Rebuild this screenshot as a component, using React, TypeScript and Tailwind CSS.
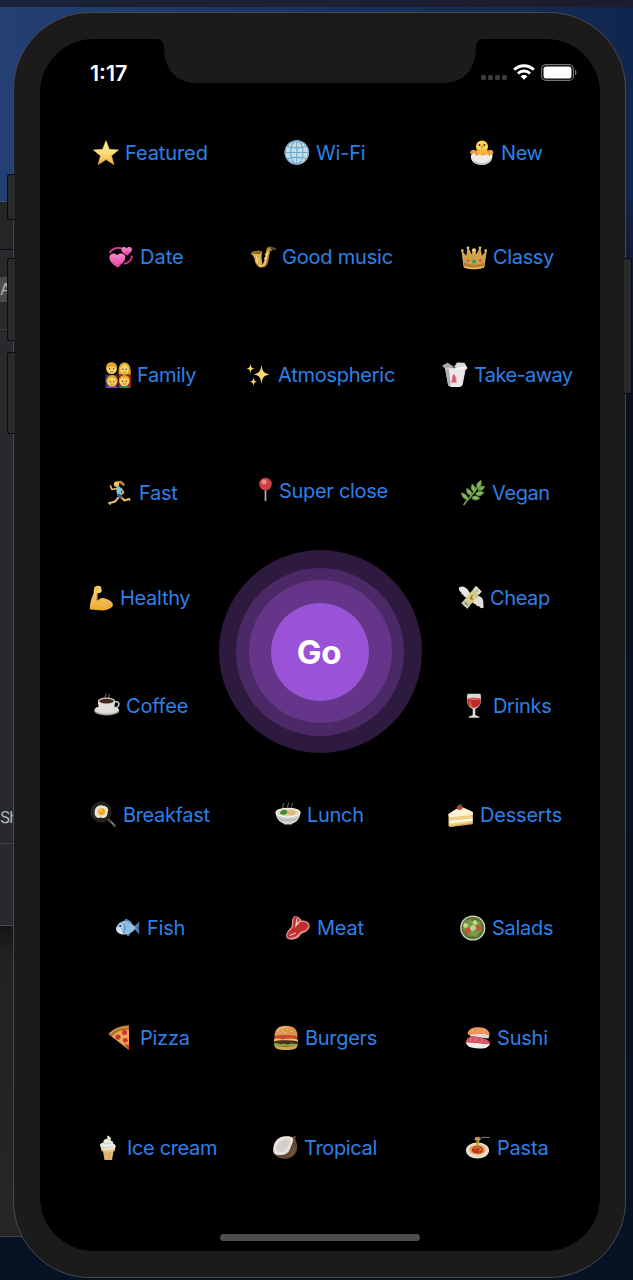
import type { ReactNode } from "react";

type Item = { label: string; pad: string; track: string; icon: ReactNode };

const star = (
  <>
    <defs>
      <linearGradient id="star" x1="0" y1="0" x2="0" y2="1">
        <stop offset="0" stopColor="#fff0a8" />
        <stop offset="0.5" stopColor="#fbdc7c" />
        <stop offset="1" stopColor="#eeb03c" />
      </linearGradient>
    </defs>
    <path d="M13 .6 16.4 9.3 25.6 9.9 18.5 15.7 20.9 24.6 13 19.6 5.2 24.6 7.5 15.7.3 9.9 9.6 9.3Z" fill="url(#star)" stroke="#eebd58" strokeWidth=".6" strokeLinejoin="round" />
  </>
);

const globe = (
  <>
    <circle cx="12.8" cy="12.5" r="12.2" fill="#c6dde8" />
    <g fill="none" stroke="#6fa9ca" strokeWidth="1.1">
      <circle cx="12.8" cy="12.5" r="11.6" />
      <ellipse cx="12.8" cy="12.5" rx="6.2" ry="11.8" />
      <path d="M12.8.6v24M.8 12.5h24M3 6.2c5.5 2.2 14 2.2 19.6 0M3 18.8c5.500-2.200 14-2.200 19.600 0" />
    </g>
  </>
);

const chick = (
  <>
    <path d="M1 12.5C2 9.400 5 9 7.500 11L18.500 11C21 9 24 9.500 24.500 12.500 23 15.500 20 17 13 17S2.500 15.500 1 12.500Z" fill="#f09a3c" />
    <path d="M2 15 5 13l3 3 3.200-3 3 3 3.200-3 2.800 3 3-3c1.500 7-3 12-10 12S1 21.500 2 15Z" fill="#efece8" />
    <path d="M3.200 18.500C5 23 9 25 13 25s8-2 9.600-7C20 22 16 23.200 13 23.200S6 22 3.200 18.500Z" fill="#c2bbb6" />
    <circle cx="13" cy="6.500" r="6" fill="#fbd657" />
    <path d="M7.500 9h10.600l1.500 5-2 1.600-3.300-2.900-3 3-3.200-3Z" fill="#f8b94b" />
    <circle cx="10.500" cy="5" r="1" fill="#3b2a17" />
    <circle cx="15.400" cy="5" r="1" fill="#3b2a17" />
    <path d="m11.500 6.500 1.500-.8 1.500.8-1.500 2Z" fill="#e87a25" />
  </>
);

const hearts = (
  <>
    <defs>
      <linearGradient id="pink" x1="0" y1="0" x2="0" y2="1">
        <stop offset="0" stopColor="#fb8acb" />
        <stop offset="1" stopColor="#db3c9b" />
      </linearGradient>
    </defs>
    <path d="M2 8.500C4 5 8 3.600 13 4.200M23.800 12.500C23.500 16 20.500 18.500 17 19.600" fill="none" stroke="#c93a8b" strokeWidth="2" strokeLinecap="round" />
    <path d="M9.800 23.800C6.500 21.500 1.200 18 1.400 13.300 1.600 9.400 6.500 8.200 9 11.200 12 8 17.600 9.200 17.300 13.700 17 18 12.500 20.500 9.800 23.800Z" fill="url(#pink)" />
    <path d="M19.200 11.800C16.500 10 13 8.300 13.300 5.300 13.700 2.600 17 2.200 18.500 4.400 20.600 1.800 24.300 2.800 24 5.800 23.700 8.500 20.800 9.500 19.200 11.800Z" fill="url(#pink)" />
  </>
);

const sax = (
  <>
    <path d="M21.500 4.500 18.500 5.500 16 17.500c-.8 5-6.500 5.500-8 1L6.500 12" fill="none" stroke="#b98b2a" strokeWidth="4" strokeLinejoin="round" />
    <path d="M.8 9.500C3 6.500 9 5.800 12.500 8c-1.500 3-1 6-.5 9.500 1 4-5.500 5.500-6.800.5C4.800 15 4 12 .8 9.500Z" fill="#dcb24c" />
    <path d="M18 7 15 18.500c-.7 3-4 4.500-6 2.500" fill="none" stroke="#efcf72" strokeWidth="1.600" />
    <path d="M1.300 9.400C4 7 9 6.500 12 8.200L9.500 10Z" fill="#7b5719" />
    <path d="M6.500 12.500 7.500 18.500M14.800 10l3 .8M14 14.200l3 .7" stroke="#fff0a4" strokeWidth="1" />
    <path d="m21.500 4 3 1" stroke="#4c4c4e" strokeWidth="2.500" strokeLinecap="round" />
  </>
);

const crown = (
  <>
    <path d="m1 7 4.500 6L7 3.800l3.700 7.700L13 5l2.500 6.500L19 3.800l1.600 9.200L25.200 7 23 23c-5 2.500-15 2.500-20 0Z" fill="#d1a044" stroke="#e8c46d" strokeWidth=".8" strokeLinejoin="round" />
    <path d="M3 18.500c5 2.800 15 2.800 20.200 0L22.800 23c-5 2.500-15 2.500-19.800 0Z" fill="#b57d2f" />
    <g fill="#f0d27f">
      <circle cx="1.400" cy="6.500" r="1.200" /><circle cx="7" cy="3.800" r="1.300" /><circle cx="13" cy="6.200" r="2" /><circle cx="19" cy="3.800" r="1.300" /><circle cx="24.700" cy="6.500" r="1.200" />
    </g>
    <circle cx="13" cy="17.500" r="2" fill="#2f9b78" />
    <circle cx="6.800" cy="16.500" r="1.500" fill="#d35c67" /><circle cx="19.300" cy="16.500" r="1.500" fill="#d35c67" />
    <path d="M3 22.500c5 2.500 15 2.500 19.800 0" fill="none" stroke="#efc867" strokeWidth="1.300" />
  </>
);

const family = (
  <>
    <path d="M.2 26V12.500h12.600V26Z" fill="#26345f" />
    <path d="M13.500 26V12.500h12.300V26Z" fill="#a51f2b" />
    <path d="M13.600 12.500C13 6 14.500.5 19.500.5S26 6 25.800 12.500Z" fill="#dba22d" />
    <circle cx="6.600" cy="6.800" r="5.300" fill="#fad265" />
    <path d="M1.200 7C.7 2.500 3 .2 6.600.2S12.500 2.500 12 7C10.500 3.500 3 3.500 1.200 7Z" fill="#e2a62f" />
    <ellipse cx="19.500" cy="7.500" rx="4.300" ry="4.900" fill="#fad265" />
    <path d="M15.200 7.500C16 4 18 3 20.500 2.500L24 6.500 23 3 19 .8 15.500 4Z" fill="#e9b33b" />
    <path d="M1 26c.5-4 11-4 11.500 0Z" fill="#7b3fc4" />
    <path d="M13.800 26c.5-4 10.500-4 11 0Z" fill="#178361" />
    <circle cx="7" cy="18.800" r="5.800" fill="#e0a22e" />
    <circle cx="7" cy="19.800" r="4.300" fill="#fad265" />
    <circle cx="19.300" cy="19" r="5.200" fill="#fad265" />
    <path d="M14 18.300c0-6.800 10.700-6.800 10.700 0-2.200-3.500-8-3.500-10.700 0Z" fill="#e2a62f" />
    <g fill="#513a18">
      <circle cx="4.700" cy="6.800" r=".7" /><circle cx="8.600" cy="6.800" r=".7" /><circle cx="17.900" cy="7.300" r=".7" /><circle cx="21.300" cy="7.300" r=".7" />
      <circle cx="5.300" cy="19.500" r=".7" /><circle cx="8.700" cy="19.500" r=".7" /><circle cx="17.600" cy="19.300" r=".7" /><circle cx="21.200" cy="19.300" r=".7" />
    </g>
    <path d="M4.800 9.500q1.800 1.500 3.600 0M18 10q1.500 1.200 3.200 0M5.400 21.900q1.600 1.200 3.200 0M17.700 21.700q1.600 1.200 3.400 0" fill="none" stroke="#a84c28" strokeWidth=".8" />
  </>
);

const sparkles = (
  <g fill="#fbd772">
    <path d="M15.500 2.500c.8 6.800 2 8.600 8.300 9.900-6.300 1.200-7.500 3-8.300 9.900-.9-6.900-2-8.700-8.300-9.900 6.300-1.300 7.400-3.100 8.300-9.900Z" />
    <path d="M4.500 1.500c.5 3.700 1 4.500 4 5.100-3 .7-3.500 1.500-4 5-.5-3.500-1-4.300-4-5 3-.6 3.500-1.400 4-5.100ZM7.500 15.500c.4 3 1 3.700 3.600 4.300-2.600.6-3.200 1.300-3.600 4.300-.5-3-1-3.700-3.600-4.300 2.600-.6 3.100-1.300 3.600-4.300Z" />
  </g>
);

const takeaway = (
  <>
    <path d="M.2 3.500 5.500.8l6.500 4L4 8Z" fill="#aaa8ad" />
    <path d="m12 5 3-4.500L22.500.8 25.500 6l-2 1.500Z" fill="#dad8dc" />
    <path d="M3 6.500 6.800 5.500l15 .2 2 1.300-3.300 16.300L18 25H9l-2.800-1.500Z" fill="#d9d7da" />
    <path d="m6.800 7 16.300-.5-3 16.500-2.600 2H9Z" fill="#ebe9eb" />
    <path d="m3 6.500 3.800.5L9 25l-2.800-1.500Z" fill="#b2afb4" />
    <path d="m13.500 5.500 10-1.200 2 2.200-2.400 1.500-9.300-.5Z" fill="#f3f2f4" />
    <path d="m12 11.500 1 2.500 1.300 1-1 .5 1.700 2-1.500.2 1.700 2.800-6.400-.1 1.600-2.700-1 .2 1.300-2-.8-.5Z" fill="#dd5c6a" />
  </>
);

const runner = (
  <g fill="none" strokeLinecap="round" strokeLinejoin="round">
    <path d="m10 2.500 3.500-.5 3 2.500" stroke="#c98925" strokeWidth="2.600" />
    <path d="m10 8.500-5 1L3.500 6" stroke="#efbb57" strokeWidth="1.700" />
    <path d="m14 8.500 2.500 4-2 1.500" stroke="#efbb57" strokeWidth="1.600" />
    <path d="m11.500 8.500.7 5" stroke="#7cc9dd" strokeWidth="4.600" />
    <path d="m14 17 3.500 3.500 4.500-1.500M11.500 17.500 8 21.500 2.800 23" stroke="#f2bf5b" strokeWidth="1.900" />
    <path d="m12 15.500 1.500 1.300" stroke="#535091" strokeWidth="3.600" />
    <path d="m22.300 18.500.6 2M1.500 22.800l1.800 1.500" stroke="#b9b8c5" strokeWidth="1.300" />
    <circle cx="9.500" cy="4.200" r="2.600" fill="#f2c35f" />
  </g>
);

const pin = (
  <>
    <path d="M18.500 11v11.500" stroke="#b2adad" strokeWidth="1.700" strokeLinecap="round" />
    <circle cx="18.500" cy="6" r="6.300" fill="#ca4043" />
    <circle cx="17" cy="4" r="2.500" fill="#f08b86" />
  </>
);

const herb = (
  <>
    <path d="M4 24.500C8 18.500 13 15 18 6.500" fill="none" stroke="#76a653" strokeWidth="1.600" strokeLinecap="round" />
    <g fill="#74aa4d">
      <path d="M17.500 8C16 5 17 2.500 21 .5c.8 4-.2 6.500-3.500 7.500ZM18 10c1-3 3-4.200 6.500-3.600-1 3.500-3 4.600-6.500 3.600ZM15.500 14.300c1.800-3 4.500-3.500 8.500-1.700-2.400 3.300-5.300 4-8.500 1.700ZM11.500 17.800c2.500-2.500 5-2.300 8.300.4-3.200 2.500-6 2.500-8.300-.4ZM14.500 12c-3-1.300-4-4-2.300-8 3.400 2.500 4.200 5 2.300 8ZM11.500 15.500C8 15 6.200 12.500 6.800 8.500c3.800 1.300 5.500 3.800 4.700 7ZM8 19.500C4.500 19.700 2.500 17.600 1.300 13c4 .6 6.500 3 6.700 6.500Z" stroke="#74aa4d" strokeWidth=".7" />
    </g>
    <path d="m19.800 2.500-1.600 4M12.500 7l1.400 3.500M8 11l2.600 3M17 13.400l4.800-.6M13.500 17.800l4.500.2M3.200 14.800l3.500 3.500" stroke="#a7cc70" strokeWidth=".9" />
  </>
);

const muscle = (
  <>
    <defs>
      <linearGradient id="arm" x1="0" y1="0" x2="0" y2="1">
        <stop offset="0" stopColor="#ffda70" />
        <stop offset="1" stopColor="#eaa832" />
      </linearGradient>
    </defs>
    <path d="M2 24.600C1.400 18 4 12.500 5.700 8L6 3C8 .2 11 .6 13 1.700l.8 4.600c-1.500 2-3.200 2.400-4.700 1.800L9.500 16c2-3 5-3.800 9-2 4 1.400 6.800 3.700 6.400 6.500-1.400 3-5.600 4.600-9.800 5Z" fill="url(#arm)" />
    <path d="M9.300 8.300 8.600 15l1.600 1.500M6 3l3.500 2.300M9 1.300l1.800 2.800" stroke="#c98c29" strokeWidth=".9" fill="none" />
  </>
);

const money = (
  <>
    <path d="M1 2.500C4 .5 7.500 1.500 10 5l3 5-5 2.500C6 11.500 5 11 5.500 9.800 3.500 9.500 2.800 8.500 3.300 7.300 1.500 6.500.5 5 1 2.500Z" fill="#e8e7e2" />
    <path d="m14 15 6-4c3.500.5 5.500 3 5.300 6L25.500 23c-2.500.5-4-.5-4.500-2-1.500.5-3-.2-3.200-1.700-1.600.2-2.600-.8-2.600-2Z" fill="#e2e1dc" />
    <path d="m18 1 5.500 5.500L9.500 23.500 3.500 18Z" fill="#c9cba3" />
    <path d="m18 1 5.500 5.500-2.500 3L15.500 4Z" fill="#dfdfc5" />
    <path d="m12.500 7.500 6 5.500-4 5-6-5.500Z" fill="#e9cb70" />
    <path d="m14.500 10-2 3.500 2.500.5M18 4.500l2 2M7 17.500l2.500 2.500" stroke="#7b794d" strokeWidth="1.300" fill="none" />
    <path d="m3.500 18 6 5.500M16.500 3l5.500 5" stroke="#f0efdf" strokeWidth=".8" />
  </>
);

const coffee = (
  <>
    <path d="M12 5c-3-2 2-2.700-1-4.500M15 5c-2-2 2-2.600 0-4" fill="none" stroke="#57524f" strokeWidth="1.100" />
    <ellipse cx="12.700" cy="17.700" rx="12.500" ry="4.700" fill="#a9a6a4" />
    <ellipse cx="12.700" cy="16.700" rx="12" ry="4" fill="#dedbd7" />
    <path d="M20 9c7-2 6.500 7-1.500 6" fill="none" stroke="#d5d2ce" strokeWidth="1.500" />
    <path d="M4 7.800h17c.3 6.800-3 11.500-8.500 11.500S3.600 14.600 4 7.800Z" fill="#e3e0dc" />
    <ellipse cx="12.500" cy="7.800" rx="8.500" ry="3.300" fill="#d3cfcb" />
    <ellipse cx="12.500" cy="8.100" rx="7.200" ry="2.400" fill="#45271d" />
  </>
);

const wine = (
  <>
    <path d="M6.500.8h13c1 6 1.500 12.500-5.200 15v6.300l4 1.600v1.100H7.700v-1.100l4-1.600v-6.300C5 13.300 5.500 6.800 6.500.8Z" fill="#dad9dd" />
    <path d="M6.300 5.800h13.400c.4 5.500-2 9-6.700 9s-7.100-3.500-6.700-9Z" fill="#bd2b28" />
    <ellipse cx="13" cy="5.800" rx="6.700" ry="1.200" fill="#de5f56" />
    <path d="M9 8c-.2 2.500.7 4.300 2 5.300" stroke="#e36c60" strokeWidth="1.300" fill="none" />
  </>
);

const pan = (
  <>
    <path d="m17 17 6.800 6.800" stroke="#4c4641" strokeWidth="2.600" strokeLinecap="round" />
    <circle cx="10" cy="10" r="10" fill="#22211f" stroke="#33312d" strokeWidth=".8" />
    <path d="M4 7.500C6 2.500 10 2.800 12.500 3.700 17 4.200 18 8 16.500 10.500 17 15 13 17 9.500 15.600 5 17 2.500 13 4 7.500Z" fill="#e9e4d6" />
    <circle cx="10.500" cy="9.600" r="3.700" fill="#f3a62d" />
    <circle cx="9.500" cy="8.300" r="1.300" fill="#ffd16d" />
    <path d="m20 19.700 3.600 3.500" stroke="#aaa39b" strokeWidth="1" />
  </>
);

const soup = (
  <>
    <path d="M8.500 6c-2.500-2.500 1.500-3.500 0-5M13 5.500c-2-2.500 2-3 .2-5M17 5.500c-2-2 1.500-3 .2-4.500" fill="none" stroke="#5f5e5a" strokeWidth="1.100" />
    <path d="M.5 10.500h25c-.5 6-4 10-8 11l-1 1H9.400l-1-1C4 20 .8 15.500.5 10.500Z" fill="#d0d0cc" />
    <ellipse cx="13" cy="10.500" rx="12.500" ry="4.800" fill="#f1f0eb" />
    <ellipse cx="13" cy="10.500" rx="10.700" ry="3.600" fill="#ded29a" />
    <path d="M5.500 9.500 9 7.500l3 1.300 1 2L9 13l-4-1.300Z" fill="#408a37" />
    <path d="m12 10 4-2 5 2-2.500 3-5-.4Z" fill="#e5b27e" />
    <path d="M4 16.500c4 2.300 14 2.300 18 0" stroke="#aaa9a4" fill="none" />
  </>
);

const cake = (
  <>
    <path d="m.5 12 12-7.500L24.800 10v11.300L2 25 .5 23.800Z" fill="#edcf83" />
    <path d="M.5 12 12.500 4.500 24.800 10 24.500 13 2 15.200.5 14Z" fill="#fff1d5" />
    <path d="m1.500 18.800 23.200-2.400v2.300L1.500 21.500Z" fill="#fff4df" />
    <path d="m2 23.800 22.700-3v1.500L2 25Z" fill="#d4a952" />
    <path d="M8.500 6c0-3.200 5.200-3.600 6.300-.4-.8 3-4.400 3.300-6.300.4Z" fill="#c53632" />
    <path d="m10.300 3.200 1.700.6 1.600-1.300" stroke="#5b873a" fill="none" strokeWidth="1.100" />
  </>
);

const fish = (
  <>
    <path d="M7.500 7 11 3.600l7 4M9.500 18.500l4 3 2.500-4M18 12.500l6.500-6-.8 6.500.8 6.500Z" fill="#517fa8" />
    <path d="M1.200 12.500C4 5.800 10.500 4.500 15.500 7.500l5 4.500v1.500C16 19.500 9 21.200 4 18 1.500 16.500.8 14.500 1.200 12.500Z" fill="#8ebee2" />
    <path d="M1.500 13C3.500 10.500 7 13.500 8 19.500 4 19 .5 16.500 1.500 13Z" fill="#d6e4ed" />
    <path d="M8.500 8.500c2 2.500 2 6.800-.5 9.500" stroke="#5c8eba" fill="none" strokeWidth="1.100" />
    <circle cx="5.500" cy="11" r="2" fill="#f3f6f5" /><circle cx="5.300" cy="11" r="1.200" fill="#17334d" />
  </>
);

const meat = (
  <>
    <path d="M9 1.500C12.500.3 15 2.800 16.700 5.500c6-.8 10 4 7 8.500-3 4.700-7 3-9 7-3 4.500-12 5.200-13.500 1C.5 18.500 3 15 6 12.500 8 9.500 5.500 4.300 9 1.500Z" fill="#dd8f89" />
    <path d="M9.500 2.200c3-.8 4.500 2 6 4.600 5.500-.8 9.300 2.500 7 6-2.500 4-6.500 2.500-9 6.300-3 3.500-9.500 4.800-11.300 2.300C2 18.500 4.500 16 7 13.500 10 10.500 6.500 5.500 9.500 2.200Z" fill="#c12d30" />
    <path d="m12 3.500-1 7 4-4.500" fill="none" stroke="#f2c8bd" strokeWidth="1.400" />
    <path d="m4.500 20.500 6.500-2.500" stroke="#f0c4bb" strokeWidth="1.300" />
  </>
);

const salad = (
  <>
    <circle cx="12.800" cy="13" r="12.600" fill="#d6d8cd" />
    <circle cx="12.800" cy="13" r="11.300" fill="#55792f" />
    <path d="m5 6 6-2 3 5 6-3 2 9-6 7-8-2-5-6Z" fill="#79974c" />
    <path d="m7 9 4 3 3-2 3 5 3-2M7 18l5-2 4 4" fill="none" stroke="#8fa863" strokeWidth="1" />
    <g fill="#c94f3e"><circle cx="7.500" cy="16" r="2.900" /><circle cx="19" cy="12.800" r="2.700" /></g>
    <g fill="#bfd76a" stroke="#e3eda9" strokeWidth=".6"><circle cx="13" cy="13" r="2.300" /><circle cx="15" cy="7.500" r="2" /><circle cx="5.500" cy="10.500" r="1.900" /></g>
  </>
);

const pizza = (
  <>
    <path d="M.4 9C6 3.500 12 .8 21 .4V25Z" fill="#efa557" />
    <path d="M.4 9C6 3 12 .4 21 .4v4.400C14 4.500 8.500 6.500 4 11.200Z" fill="#b46c2d" />
    <path d="M1.800 8.600C7 4 13 2 20.500 2" fill="none" stroke="#dda45b" strokeWidth="1.200" />
    <g fill="#c9382b"><circle cx="10" cy="12" r="2.600" /><circle cx="16.500" cy="7.500" r="2.500" /><circle cx="17.300" cy="15.300" r="2.400" /><path d="M16.500 19.200 21 20v5Z" /></g>
  </>
);

const burger = (
  <>
    <path d="M1.500 11C1.500 4.500 5 .7 13 .7S24.500 4.500 24.500 11Z" fill="#d99750" />
    <path d="M4 7C5.500 3 9 2 13.500 2.300" fill="none" stroke="#edbb78" strokeWidth="1.500" />
    <path d="M1 11.500c2-2 22-2 24 0L24 14H2Z" fill="#c84b32" />
    <path d="M1 14c4-1.500 6 .8 10 0s9-1 14 .5v3H1Z" fill="#f1c253" />
    <path d="M1 16.500c3-2 20-1.500 24 0v3H1Z" fill="#502d20" />
    <path d="M.8 19c3-2.500 5 1 8 0s5 1.300 8 0 5 1 8-.5l-.5 3H1.500Z" fill="#80ad39" />
    <path d="M1.800 20.500c5 1.500 17 1.500 22.400 0C24 24 20.500 25 13 25S2 24 1.800 20.500Z" fill="#dca05b" />
    <g stroke="#f8daa0" strokeWidth="1"><path d="m9 5 1 .5M14 4l1 .3M18 6l1 .5M12 7.500h1M6.500 8l1-.3" /></g>
  </>
);

const sushi = (
  <>
    <path d="m3.500 7.500 21 2-1 4-18-2Z" fill="#e1ddd6" />
    <path d="M2.500 8C4.500 2.500 10 1.800 14.500 2.300 20 2.600 24 5 24.800 9.500 18 8.800 9 9 3.500 10Z" fill="#ee9650" />
    <path d="m8.500 3.500-1.500 4M14 3l-1 4.500M19 4v4.500" stroke="#f8b27c" strokeWidth=".9" />
    <path d="M1 17c7 0 17 2 24 1.500-1 4-5.500 5.500-11 5C6.500 23 1 22 1 17Z" fill="#eeeae6" />
    <path d="M.5 18C1.500 10.500 9 10 14.500 12.500c5 .8 9 2 11 6-7 2.300-15.500-2.300-25-.5Z" fill="#d65664" />
    <path d="m6.500 13-1.500 3M12 12.500l-1.800 3.700M17 14l-1.200 3.500" stroke="#e88089" strokeWidth=".9" />
  </>
);

const iceCream = (
  <>
    <path d="m7.500 13.500 11.500 0-2 11.500H9.500Z" fill="#e2ba76" />
    <path d="m5.800 12 14.600 0-.8 4.300H6.500Z" fill="#efcf92" />
    <path d="M6 12.500c-2.500-3 .5-5 2.500-4.800C7.500 5 11 4 12.500 3.500L12 .5c4 1 4.500 3 3.500 5 3 .6 3 2.300 2.500 3.200 3 .7 3.500 3 1.500 4.200-4 2-9.500 1.700-13.500-.4Z" fill="#eeebe4" />
    <path d="M8.500 8c3 1.500 6 .8 8-.5M6.500 11.500c4 1.800 9 1.300 12-.8M12 4.300c1.500.5 2.500.2 3.500-.8" fill="none" stroke="#c9c2b8" strokeWidth=".9" />
    <path d="m10 18 1 7M14.500 17.500 13.800 25" stroke="#cf9f5c" strokeWidth=".8" />
  </>
);

const coconut = (
  <>
    <path d="M5 5C8 1 14 .5 20 2l4-1.300-.8 3.500c4 8 1.800 15-4.400 18.300C12 25.500 3 23 1.500 17.500Z" fill="#67493a" />
    <path d="M1.300 13C2 5.500 7.500 1.300 14 1.200c7-.2 8.300 2.500 6.400 6.500L18 14c-2 5.500-7 6.500-12 6C2 19.700.8 17 1.300 13Z" fill="#e8e4dc" />
    <path d="M4 13.500C5 8 9 4.500 14 4c4.500-.2 4.800 1.600 3.500 4l-2.500 5c-1.500 4-4.500 4.500-7.500 4-2.500 0-4-1.200-3.500-3.500Z" fill="#d2cfc8" />
    <path d="m20 17 3-4M17.500 21l4-3.500" stroke="#8b6549" strokeWidth="1" />
  </>
);

const pasta = (
  <>
    <ellipse cx="12.500" cy="15.500" rx="11.600" ry="8" fill="#e5dbcf" />
    <ellipse cx="12.500" cy="14.700" rx="10.300" ry="6.300" fill="#eadcc8" />
    <ellipse cx="12.500" cy="14.700" rx="8" ry="5" fill="#dba546" />
    <path d="M7 14c1-4 10-4 11 0s-3 4.500-5.500 4.500S6 17.500 7 14Z" fill="#ba3722" />
    <path d="m9 14 3.500-2 4 2.500-3 1.500" stroke="#e27941" fill="none" strokeWidth="1.200" />
    <path d="M9.500 4.500h6M10 3h5M12 2v9M14 2l-.7 9" stroke="#c29c4b" strokeWidth="1.300" />
    <path d="m15 3.500 3-1.200 6.500.2" stroke="#77726d" strokeWidth="1.200" fill="none" strokeLinecap="round" />
  </>
);

const topRows: { gap: string; items: Item[] }[] = [
  {
    gap: "mt-[57px]",
    items: [
      { label: "Featured", pad: "pl-[53px]", track: "tracking-[-0.1px]", icon: star },
      { label: "Wi-Fi", pad: "pl-[64px]", track: "tracking-[-0.2px]", icon: globe },
      { label: "New", pad: "pl-[49px]", track: "tracking-[-0.4px]", icon: chick },
    ],
  },
  {
    gap: "mt-[78px]",
    items: [
      { label: "Date", pad: "pl-[68px]", track: "tracking-[0px]", icon: hearts },
      { label: "Good music", pad: "pl-[30px]", track: "tracking-[-0.2px]", icon: sax },
      { label: "Classy", pad: "pl-[41px]", track: "tracking-[-0.35px]", icon: crown },
    ],
  },
  {
    gap: "mt-[92px]",
    items: [
      { label: "Family", pad: "pl-[65px]", track: "tracking-[-0.3px]", icon: family },
      { label: "Atmospheric", pad: "pl-[26px]", track: "tracking-[-0.25px]", icon: sparkles },
      { label: "Take-away", pad: "pl-[22px]", track: "tracking-[-0.6px]", icon: takeaway },
    ],
  },
  {
    gap: "mt-[92px]",
    items: [
      { label: "Fast", pad: "pl-[67px]", track: "tracking-[-0.3px]", icon: runner },
      { label: "Super close", pad: "pl-[27px] -mt-[2px]", track: "tracking-[-0.3px]", icon: pin },
      { label: "Vegan", pad: "pl-[40px]", track: "tracking-[-0.4px]", icon: herb },
    ],
  },
];

const leftItems: Item[] = [
  { label: "Healthy", pad: "pl-[48px]", track: "tracking-[-0.3px]", icon: muscle },
  { label: "Coffee", pad: "pl-[54px]", track: "tracking-[-0.2px]", icon: coffee },
];

const rightItems: Item[] = [
  { label: "Cheap", pad: "pl-[38px]", track: "tracking-[-0.4px]", icon: money },
  { label: "Drinks", pad: "pl-[41px]", track: "tracking-[-0.35px]", icon: wine },
];

const bottomRows: { gap: string; items: Item[] }[] = [
  {
    gap: "mt-[49px]",
    items: [
      { label: "Breakfast", pad: "pl-[51px]", track: "tracking-[-0.35px]", icon: pan },
      { label: "Lunch", pad: "pl-[55px]", track: "tracking-[-0.3px]", icon: soup },
      { label: "Desserts", pad: "pl-[28px]", track: "tracking-[-0.2px]", icon: cake },
    ],
  },
  {
    gap: "mt-[87px]",
    items: [
      { label: "Fish", pad: "pl-[75px]", track: "tracking-[-0.2px]", icon: fish },
      { label: "Meat", pad: "pl-[65px]", track: "tracking-[-0.2px]", icon: meat },
      { label: "Salads", pad: "pl-[40px]", track: "tracking-[-0.3px]", icon: salad },
    ],
  },
  {
    gap: "mt-[84px]",
    items: [
      { label: "Pizza", pad: "pl-[68px]", track: "tracking-[-0.25px]", icon: pizza },
      { label: "Burgers", pad: "pl-[53px]", track: "tracking-[-0.3px]", icon: burger },
      { label: "Sushi", pad: "pl-[45px]", track: "tracking-[-0.2px]", icon: sushi },
    ],
  },
  {
    gap: "mt-[84px]",
    items: [
      { label: "Ice cream", pad: "pl-[55px]", track: "tracking-[-0.35px]", icon: iceCream },
      { label: "Tropical", pad: "pl-[52px]", track: "tracking-[-0.35px]", icon: coconut },
      { label: "Pasta", pad: "pl-[45px]", track: "tracking-[-0.2px]", icon: pasta },
    ],
  },
];

function Category({ item }: { item: Item }) {
  return (
    <button className={`flex h-[26px] items-center whitespace-nowrap ${item.pad}`}>
      <svg className="h-[26px] w-[26px] shrink-0 overflow-visible" viewBox="0 0 26 26">{item.icon}</svg>
      <span className={`ml-[6px] text-[20px] leading-[26px] text-[#2e80e8] ${item.track}`}>{item.label}</span>
    </button>
  );
}

function Row({ gap, items }: { gap: string; items: Item[] }) {
  return (
    <div className={`grid grid-cols-[180px_200px_180px] ${gap}`}>
      {items.map((item) => <Category key={item.label} item={item} />)}
    </div>
  );
}

function StatusBar() {
  return (
    <div className="flex h-11 shrink-0">
      <div className="w-[124px] shrink-0 pt-[21px] pl-[50px] text-[21.5px] leading-[26px] font-semibold text-white">1:17</div>
      <svg className="h-11 w-[312px] shrink-0 overflow-visible" viewBox="0 0 312 44">
        <path d="M-8-1H320V0C315 0 312 3 312 8 312 30 300 44 279 44H33C12 44 0 30 0 8 0 3-3 0-8 0Z" fill="#1b1b1b" />
      </svg>
      <div className="flex w-[124px] shrink-0 items-start pt-[25px] pl-[5px]">
        <div className="mt-[11px] flex gap-[2.500px]">
          {[0, 1, 2, 3].map((n) => <span key={n} className="h-[5px] w-[4.500px] rounded-[1.500px] bg-[#3b3b3b]" />)}
        </div>
        <svg className="ml-[6px] h-4 w-[22px]" viewBox="0 0 22 16" fill="none" stroke="#fff" strokeWidth="2.900">
          <path d="M1.200 5.800c5.500-5.400 14.100-5.400 19.600 0M4.900 9.500c3.400-3.400 8.800-3.400 12.200 0" />
          <path d="M11 15.800 7.600 12.300c1.900-1.800 4.900-1.800 6.800 0Z" fill="#fff" stroke="none" />
        </svg>
        <svg className="ml-[6px] h-[17px] w-9" viewBox="0 0 36 17">
          <rect x=".6" y=".6" width="31.800" height="15.800" rx="4.500" fill="none" stroke="#777" strokeWidth="1.100" />
          <rect x="2.500" y="2.500" width="28" height="12" rx="2.800" fill="#fff" />
          <path d="M34 5.800c2 .8 2 4.600 0 5.400Z" fill="#777" />
        </svg>
      </div>
    </div>
  );
}

function GoButton() {
  return (
    <button className="flex h-[203px] w-[203px] shrink-0 items-center justify-center rounded-full bg-[#2d1a3e]">
      <span className="flex h-[168px] w-[168px] items-center justify-center rounded-full bg-[#4b2967]">
        <span className="flex h-[143px] w-[143px] items-center justify-center rounded-full bg-[#643588]">
          <span className="flex h-[98px] w-[98px] items-center justify-center rounded-full bg-[#9a53d6] pt-[2px] pr-[2px] text-[33px] font-bold tracking-[-0.3px] text-white">Go</span>
        </span>
      </span>
    </button>
  );
}

function Desktop() {
  return (
    <div className="absolute inset-0 flex flex-col bg-linear-to-b from-[#1d3a70] via-[#0a1020] via-30% to-[#071225]">
      <div className="h-[7px] bg-linear-to-r from-[#1b2237] to-[#1e1c2e]" />
      <div className="h-[194px] bg-linear-to-r from-[#233f74] to-[#10264e]" />
      <div className="flex h-[725px] w-10 flex-col border-y border-[#4c4d50] bg-[#28292c]">
        <div className="h-12 border-b border-[#0e0e10] bg-[#242527]" />
        <div className="mt-[27px] h-[25px] w-4 bg-[#4b4b4d] text-[16px] leading-[25px] text-[#b5b5b7]">A</div>
        <div className="mt-[27px] border-t border-[#3b3c3f]" />
        <div className="mt-[475px] h-6 w-10 text-[16px] leading-6 tracking-[-1px] text-[#b5b5b7]">Sh</div>
        <div className="mt-[14px] border-t border-[#414245]" />
      </div>
      <div className="h-[311px] w-14 border-b border-[#434343] bg-linear-to-b from-[#151515] via-[#222] via-10% to-[#262626]" />
    </div>
  );
}

export default function App() {
  return (
    <main className="relative h-[1280px] w-[633px] overflow-hidden bg-[#0a1020] font-['Inter',sans-serif]">
      <Desktop />
      <section className="absolute top-[12px] left-[13px] h-[1266px] w-[613px] rounded-[77px] border border-[#48494c] bg-[#1b1b1b] pt-[26px] pl-[26px]">
        <div className="flex h-[1212px] w-[560px] flex-col overflow-hidden rounded-[54px] bg-black">
          <StatusBar />
          {topRows.map((row) => <Row key={row.items[0].label} {...row} />)}
          <div className="mt-[44px] flex h-[203px] shrink-0">
            <div className="flex w-[180px] flex-col gap-[82px] pt-[35px]">
              {leftItems.map((item) => <Category key={item.label} item={item} />)}
            </div>
            <div className="flex w-[200px] justify-center"><GoButton /></div>
            <div className="flex w-[180px] flex-col gap-[82px] pt-[35px]">
              {rightItems.map((item) => <Category key={item.label} item={item} />)}
            </div>
          </div>
          {bottomRows.map((row) => <Row key={row.items[0].label} {...row} />)}
          <div className="mt-[73px] h-[7px] w-[200px] shrink-0 self-center rounded-full bg-[#4d4d4d]" />
        </div>
      </section>
      <span className="absolute top-[174px] left-[7px] h-[46px] w-2 rounded-l-[3px] border border-r-0 border-[#0c0c0c] bg-[#2a2a2a]" />
      <span className="absolute top-[258px] left-[7px] h-[83px] w-2 rounded-l-[3px] border border-r-0 border-[#0c0c0c] bg-[#2a2a2a]" />
      <span className="absolute top-[352px] left-[7px] h-[82px] w-2 rounded-l-[3px] border border-r-0 border-[#0c0c0c] bg-[#2a2a2a]" />
      <span className="absolute top-[258px] left-[624px] h-[136px] w-2 rounded-r-[3px] border border-l-0 border-[#0c0c0c] bg-[#2a2a2a]" />
    </main>
  );
}
